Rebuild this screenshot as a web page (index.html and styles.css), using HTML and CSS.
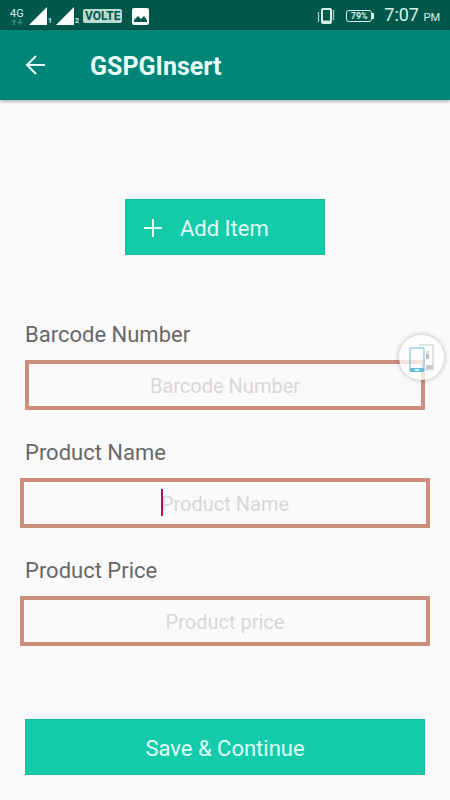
FILE: index.html
```html
<!DOCTYPE html>
<html lang="en">
<head>
<meta charset="utf-8">
<meta name="viewport" content="width=device-width, initial-scale=1">
<title>GSPGInsert</title>
<link rel="stylesheet" href="styles.css">
</head>
<body>
<div class="status">
  <div class="network"><span class="network-type">4G</span>
    <svg width="14" height="6" viewBox="0 0 14 6" fill="#2c8474"><path d="M4 0l3 3H5v3H3V3H1zM10 6L7 3h2V0h2v3h2z"/></svg>
  </div>
  <div class="signal"><svg width="18" height="18" viewBox="0 0 18 18"><path d="M18 0v18H0z" fill="#fff"/></svg><span class="sim">1</span></div>
  <div class="signal"><svg width="18" height="18" viewBox="0 0 18 18"><path d="M18 0v18H0z" fill="#fff"/></svg><span class="sim">2</span></div>
  <span class="volte">VOLTE</span>
  <svg class="picture" width="17" height="17" viewBox="0 0 17 17"><rect width="17" height="17" rx="2" fill="#fff"/><path d="M2 14v-2l4-4 3 3 3-3 3 4v2z" fill="#00574a"/></svg>
  <div class="status-right">
    <svg width="18" height="18" viewBox="0 0 18 18" fill="none" stroke="#d5f1e9"><rect x="5" y="2" width="9" height="14" rx="1" stroke-width="2"/><path d="M5 15h9" stroke-width="3"/><path d="M2 5L1 7l1 2-1 2 1 2-1 2M16 3l1 2-1 2 1 2-1 2 1 2"/></svg>
    <div class="battery">79%</div>
    <div class="clock">7:07 <span class="meridiem">PM</span></div>
  </div>
</div>
<header class="appbar">
  <button class="back" type="button" aria-label="Back">
    <svg width="20" height="20" viewBox="0 0 20 20" fill="none" stroke="#e8fffb" stroke-width="2"><path d="M20 10H2M11 1l-9 9 9 9"/></svg>
  </button>
  <h1 class="title">GSPGInsert</h1>
</header>
<main class="content">
  <button class="button add" type="button">
    <svg width="18" height="18" viewBox="0 0 18 18" fill="none" stroke="#e0fff8" stroke-width="2"><path d="M9 0v18M0 9h18"/></svg>
    <span>Add Item</span>
  </button>
  <form class="form">
    <div class="field">
      <label class="label" for="barcode">Barcode Number</label>
      <div class="control"><input class="input" id="barcode" type="text" placeholder="Barcode Number">
        <button class="floating" type="button" aria-label="Screen transfer">
          <svg width="26" height="30" viewBox="0 0 26 30" fill="none"><path d="M10 2h14v25h-8" stroke="#c4c7c9"/><path d="M17 22h7v4h-7z" fill="#c4c7c9"/><path d="M17 11h3v5h-3z" fill="#bdc0c3"/><path d="M17 10l2-2v3" stroke="#bdc0c3"/><path d="M1 5h14v23H1z" stroke="#6bbbdc"/><path d="M1 25h14v4H1z" fill="#6bbbdc"/><path d="M6 27h4" stroke="#d6f0fa" stroke-width="2"/></svg>
        </button>
      </div>
    </div>
    <div class="field">
      <label class="label" for="name">Product Name</label>
      <div class="control wide"><input class="input" id="name" type="text" placeholder="Product Name"><span class="caret"></span></div>
    </div>
    <div class="field">
      <label class="label" for="price">Product Price</label>
      <div class="control wide"><input class="input" id="price" type="text" placeholder="Product price"></div>
    </div>
    <button class="button save" type="submit">Save &amp; Continue</button>
  </form>
</main>
</body>
</html>
```
FILE: styles.css
```css
* { box-sizing: border-box; }

body {
  margin: 0;
  background: #fafafa;
  font-family: Roboto, "Liberation Sans", sans-serif;
}

button { border: 0; font: inherit; padding: 0; }
svg { display: block; flex: none; }

.status {
  display: flex;
  align-items: center;
  height: 30px;
  padding: 2px 10px 0;
  background: #00574a;
  color: #d5f1e9;
}

.network { width: 19px; }
.network-type { display: block; font-size: 11px; line-height: 11px; }
.signal { display: flex; align-items: flex-end; width: 27px; }
.sim { margin-left: 1px; font-size: 7px; line-height: 7px; font-weight: 700; }

.volte {
  padding: 0 2px;
  border-radius: 2px;
  background: #b8dcd4;
  color: #00574a;
  font-size: 12px;
  line-height: 14px;
  font-weight: 700;
}

.picture { margin-left: 10px; }
.status-right { display: flex; align-items: center; margin-left: auto; }

.battery {
  position: relative;
  width: 26px;
  margin: 0 12px 0 11px;
  border: 1px solid #d5f1e9;
  border-radius: 3px;
  font-size: 9px;
  line-height: 10px;
  font-weight: 700;
  text-align: center;
}

.battery::after {
  content: "";
  position: absolute;
  top: 2px;
  right: -3px;
  width: 2px;
  height: 6px;
  background: #d5f1e9;
}

.clock { font-size: 18px; line-height: 28px; }
.meridiem { font-size: 11px; }

.appbar {
  display: flex;
  align-items: center;
  height: 70px;
  padding: 0 25px;
  background: #008577;
  box-shadow: 0 1px 4px rgba(0, 0, 0, 0.4);
}

.back { margin-right: 45px; background: none; }

.title {
  margin: 0;
  padding-top: 3px;
  color: #e8fffb;
  font-size: 25px;
  line-height: 30px;
  font-weight: 700;
}

.content { padding: 99px 25px 25px; }

.button {
  display: flex;
  align-items: center;
  height: 56px;
  padding-top: 2px;
  border: 1px solid #20b89c;
  background: #14cba9;
  color: #e0fff8;
  font-size: 22px;
}

.add {
  width: 200px;
  margin: 0 auto 65px;
  padding-left: 18px;
  gap: 18px;
}

.field { margin-bottom: 28px; }

.label {
  display: block;
  margin-bottom: 10px;
  color: #686868;
  font-size: 22px;
  line-height: 30px;
}

.control { position: relative; }
.wide { margin: 0 -5px; }

.input {
  display: block;
  width: 100%;
  height: 50px;
  padding: 2px 0 0;
  border: 4px solid #ce8e7c;
  border-radius: 0;
  outline: 0;
  background: #fafafa;
  color: #686868;
  font: inherit;
  font-size: 20px;
  text-align: center;
}

.input::placeholder { color: #dad7d7; opacity: 1; }

.caret {
  position: absolute;
  top: 11px;
  left: calc(50% - 64px);
  width: 2px;
  height: 27px;
  background: #b31254;
}

.floating {
  position: absolute;
  top: -25px;
  right: -19px;
  display: grid;
  place-items: center;
  width: 45px;
  height: 45px;
  border-radius: 50%;
  background: rgba(255, 255, 255, 0.75);
  box-shadow: 0 0 5px 1px rgba(0, 0, 0, 0.2);
}

.save {
  justify-content: center;
  width: 100%;
  margin-top: 73px;
}
```
